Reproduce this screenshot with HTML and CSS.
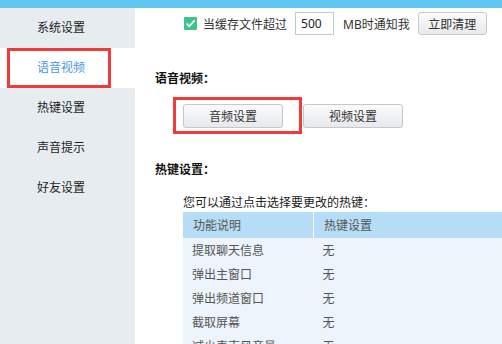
FILE: index.html
```html
<!DOCTYPE html>
<html lang="zh-CN">

<head>
    <meta charset="UTF-8">
    <title>设置</title>
    <link rel="stylesheet" href="styles.css">
</head>

<body>
    <div class="topbar"></div>
    <div class="wrap">
        <ul class="sidebar">
            <li>系统设置</li>
            <li class="active">语音视频<span class="mark"></span></li>
            <li>热键设置</li>
            <li>声音提示</li>
            <li>好友设置</li>
        </ul>

        <div class="main">
            <div class="cache-row">
                <span class="check">
                    <svg width="13" height="13" viewBox="0 0 13 13">
                        <path d="M2.6 6.6 L5.3 9.3 L10.6 3.4" fill="none" stroke="#fff" stroke-width="1.8" />
                    </svg>
                </span>
                <span class="label">当缓存文件超过</span>
                <input class="size" type="text" value="500">
                <span class="label">MB时通知我</span>
                <button class="btn small">立即清理</button>
            </div>

            <h3 class="title first">语音视频：</h3>
            <div class="btn-row">
                <button class="btn">音频设置</button>
                <button class="btn">视频设置</button>
                <span class="mark"></span>
            </div>

            <h3 class="title">热键设置：</h3>
            <p class="hint">您可以通过点击选择要更改的热键：</p>
            <table class="keys">
                <tr>
                    <th>功能说明</th>
                    <th>热键设置</th>
                </tr>
                <tr>
                    <td>提取聊天信息</td>
                    <td>无</td>
                </tr>
                <tr>
                    <td>弹出主窗口</td>
                    <td>无</td>
                </tr>
                <tr>
                    <td>弹出频道窗口</td>
                    <td>无</td>
                </tr>
                <tr>
                    <td>截取屏幕</td>
                    <td>无</td>
                </tr>
                <tr>
                    <td>减少麦克风音量</td>
                    <td>无</td>
                </tr>
            </table>
        </div>
    </div>
</body>

</html>
```

FILE: styles.css
```css
body {
    margin: 0;
    width: 502px;
    height: 344px;
    overflow: hidden;
    background: #fff;
    font-family: "Noto Sans", "Noto Sans CJK SC", sans-serif;
    font-size: 12px;
    color: #222;
}

.topbar {
    height: 8px;
    background-color: #60c6f2;
}

.wrap {
    display: flex;
    height: 336px;
}

.sidebar {
    width: 135px;
    margin: 0;
    padding: 0;
    list-style: none;
    background-color: #e6ecf0;
    flex-shrink: 0;
}

.sidebar li {
    position: relative;
    height: 40px;
    line-height: 40px;
    padding-left: 37px;
    font-size: 12px;
    color: #1e1e1e;
}

.sidebar li.active {
    background-color: #fff;
    color: #4a9ae0;
}

.sidebar .mark {
    position: absolute;
    left: 7px;
    top: 0;
    width: 104px;
    height: 40px;
    box-sizing: border-box;
    border: 3px solid #f23a3a;
}

.main {
    flex: 1;
    padding-left: 20px;
    overflow: hidden;
}

.cache-row {
    display: flex;
    align-items: center;
    height: 23px;
    margin-top: 4px;
    padding-left: 29px;
    color: #333;
}

.check {
    width: 13px;
    height: 13px;
    background-color: #3dc48b;
    border-radius: 1px;
    margin-right: 6px;
    display: flex;
}

.label {
    margin-right: 8px;
}

.size {
    width: 39px;
    height: 23px;
    box-sizing: border-box;
    border: 1px solid #bccbd6;
    padding: 0 5px;
    margin-right: 9px;
    font-family: inherit;
    font-size: 12px;
    color: #222;
    outline: none;
}

.btn {
    width: 100px;
    height: 24px;
    padding: 0;
    border: 1px solid #c4c9ce;
    border-radius: 3px;
    background: linear-gradient(#fbfbfc, #e7e9ec);
    font-family: inherit;
    font-size: 12px;
    color: #333;
}

.btn.small {
    width: 69px;
    height: 23px;
}

.title {
    margin: 32px 0 0;
    font-size: 12px;
    line-height: 20px;
    font-weight: bold;
    color: #111;
}

.title.first {
    margin-top: 34px;
}

.btn-row {
    position: relative;
    display: flex;
    gap: 20px;
    margin: 15px 0 0 28px;
}

.btn-row .mark {
    position: absolute;
    left: -10px;
    top: -7px;
    width: 129px;
    height: 37px;
    box-sizing: border-box;
    border: 3px solid #f23a3a;
}

.hint {
    margin: 14px 0 0 28px;
    line-height: 18px;
    color: #222;
}

.keys {
    margin-left: 28px;
    width: 319px;
    border-collapse: collapse;
    background-color: #eef4fb;
    color: #555;
}

.keys th {
    height: 26px;
    padding: 0 0 0 10px;
    background-color: #b5ddf6;
    font-weight: normal;
    text-align: left;
    color: #555;
}

.keys th:first-child {
    width: 120px;
    border-right: 1px solid #fff;
}

.keys td {
    height: 24px;
    padding: 0 0 0 9px;
}
```
